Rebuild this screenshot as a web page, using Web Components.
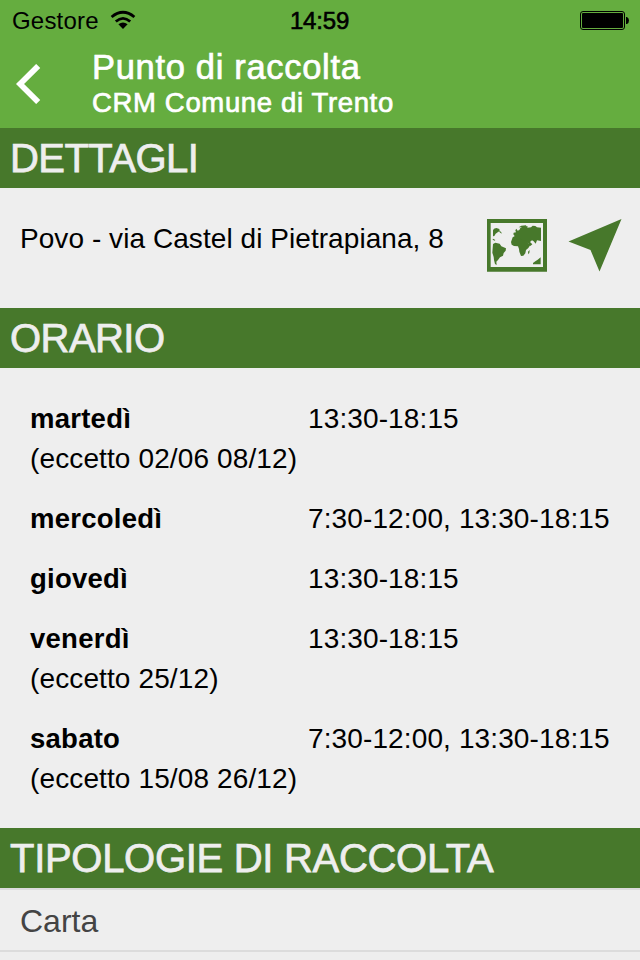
<!DOCTYPE html>
<html lang="it"><head><meta charset="utf-8"><title>Punto di raccolta</title>
<style>
body{margin:0;background:#eee;font-family:"Liberation Sans",Arial,sans-serif;width:640px;height:960px;overflow:hidden;color:#000}
</style></head><body>
<collection-page></collection-page>
<script>
const define=(name,html)=>customElements.define(name,class extends HTMLElement{
  constructor(){super();this.attachShadow({mode:'open'}).innerHTML=html;}
});
define('status-bar',`<style>
:host{display:grid;grid-template-columns:1fr auto 1fr;align-items:center;height:40px;padding:1px 11px 0 12px;box-sizing:border-box;font-size:24px;line-height:40px}
.left{display:flex;align-items:center;gap:11px}.carrier{letter-spacing:.2px}
.clock{-webkit-text-stroke:.6px #000;letter-spacing:-.2px;margin-right:2px}
.battery{justify-self:end;display:block;margin-bottom:2px}.wifi{display:block;margin-bottom:2px}
</style>
<div class="left"><span class="carrier">Gestore</span>
<svg class="wifi" width="26" height="20" viewBox="0 0 26 20"><g fill="none" stroke="#000" stroke-width="2.800"><path d="M1.600 7Q13 -2.400 24.400 7"/><path d="M5.800 11.500Q13 5.200 20.200 11.500"/></g><path d="M8.400 14.200Q13 10.600 17.600 14.200L13 19Z"/></svg></div>
<span class="clock">14:59</span>
<svg class="battery" width="49" height="19" viewBox="0 0 49 19"><rect x=".5" y=".5" width="44" height="18" rx="2.5" fill="none" stroke="#000"/><rect x="2" y="2" width="41" height="15" rx="1"/><path d="M46 6h1q2 1 2 3.500t-2 3.500h-1z"/></svg>`);
define('title-bar',`<style>
:host{display:flex;height:88px;color:#fff}
.back{width:92px;display:flex;align-items:center;padding-left:16px;box-sizing:border-box}
.back svg{display:block}
.copy{padding-top:8px}
.title{font-size:34.500px;line-height:38px;letter-spacing:.68px;-webkit-text-stroke:.7px #fff;white-space:nowrap}
.sub{font-size:27.500px;line-height:34px;letter-spacing:.65px;-webkit-text-stroke:.7px #fff;white-space:nowrap}
</style><div class="back"><svg width="25" height="40" viewBox="0 0 25 40"><path d="M22.200 2L4 20L22.200 38" fill="none" stroke="#fff" stroke-width="5.800"/></svg></div>
<div class="copy"><div class="title"><slot name="title"></slot></div><div class="sub"><slot></slot></div></div>`);
define('section-heading',`<style>
:host{display:block;height:60px;line-height:60px;padding-left:10px;background:#47782b;color:#eee;font-size:40px;letter-spacing:-.55px;-webkit-text-stroke:.75px #eee;white-space:nowrap}
:host([long]){letter-spacing:-.3px}
</style><slot></slot>`);
define('address-row',`<style>
:host{display:flex;height:120px;padding:0 18px 0 20px;align-items:flex-start;justify-content:space-between;box-sizing:border-box}
.text{font-size:28px;line-height:40px;padding-top:31px;letter-spacing:.06px;white-space:nowrap}
.icons{display:flex;gap:20px;padding-top:30px}svg{display:block}
</style><div class="text"><slot></slot></div><div class="icons">
<svg width="62" height="55" viewBox="0 0 186 165" fill="#47782b"><path fill-rule="evenodd" d="M3 3h180v158H3zM14 15v132h157V15z"/>
<path d="M21 37l3-5 7-2 9 3 1 6-6 4-6 4-4 7-4 1zM39 37l7 6 1 4-6-4zM21 62l7 4-2 2-6-3z"/>
<path d="M21 78l7-4 13 3 5 8 14 6-1 7-6 7-2 8-9 5-6 8-5 5 1 10-5-3-3-12-1-9-4-13z"/>
<path d="M75 72l5-14 8-5 14 1 5 4 11 1 6 11 4 7 7 1-8 12-7 6-2 10-6 7-7 1-5-13-1-8-3-8-12-1-7-4zM131 96l-1 9-3 4-1-8z"/>
<path d="M82 49l1-5 7-1-2-6 3-5 4 6 5-2 3-6 10-6 12 1-1 4 11-1 5-5 8 1 5 4 12 1v40l-12-2-4 10-6-7-5-3-6 5 7 7-6 5-9-11-5-6-8 1-4-4-7-2-6 3z"/>
<path d="M98 28l8-5 14-1 1 3-12 3zM141 139v-4l7-5 7-5 9-7v21z"/></svg>
<svg width="54" height="54" viewBox="568 218 54 54"><path d="M621.500 219L568.500 241.500L590.500 250L599.500 271.500Z" fill="#47782b"/></svg></div>`);
define('opening-hours',`<style>
:host{display:grid;grid-template-columns:278px 1fr;padding-left:30px;font-size:28px;line-height:40px;letter-spacing:.12px;white-space:nowrap}
b{font-size:27.500px;letter-spacing:.25px}.note{grid-column:1/-1}
</style><b><slot name="day"></slot></b><span class="hours"><slot></slot></span><span class="note"><slot name="note"></slot></span>`);
define('waste-type',`<style>
:host{display:block;height:60px;line-height:62px;border-bottom:2px solid #dcdcdc;padding-left:20px;font-size:32px;color:#444}
:host([first]){border-top:2px solid #dcdcdc}
</style><slot></slot>`);
define('collection-page',`<style>
:host{display:block}header{background:#65ad3f;height:128px}
.schedule{display:flex;flex-direction:column;gap:20px;padding:31px 0 29px}
</style><header><status-bar></status-bar><title-bar><span slot="title">Punto di raccolta</span><span>CRM Comune di Trento</span></title-bar></header>
<section-heading><span>DETTAGLI</span></section-heading>
<address-row><span>Povo - via Castel di Pietrapiana, 8</span></address-row>
<section-heading><span>ORARIO</span></section-heading>
<div class="schedule">
<opening-hours><span slot="day">martedì</span><span>13:30-18:15</span><span slot="note">(eccetto 02/06 08/12)</span></opening-hours>
<opening-hours><span slot="day">mercoledì</span><span>7:30-12:00, 13:30-18:15</span></opening-hours>
<opening-hours><span slot="day">giovedì</span><span>13:30-18:15</span></opening-hours>
<opening-hours><span slot="day">venerdì</span><span>13:30-18:15</span><span slot="note">(eccetto 25/12)</span></opening-hours>
<opening-hours><span slot="day">sabato</span><span>7:30-12:00, 13:30-18:15</span><span slot="note">(eccetto 15/08 26/12)</span></opening-hours>
</div>
<section-heading long><span>TIPOLOGIE DI RACCOLTA</span></section-heading>
<waste-type first>Carta</waste-type>`);
</script></body></html>
